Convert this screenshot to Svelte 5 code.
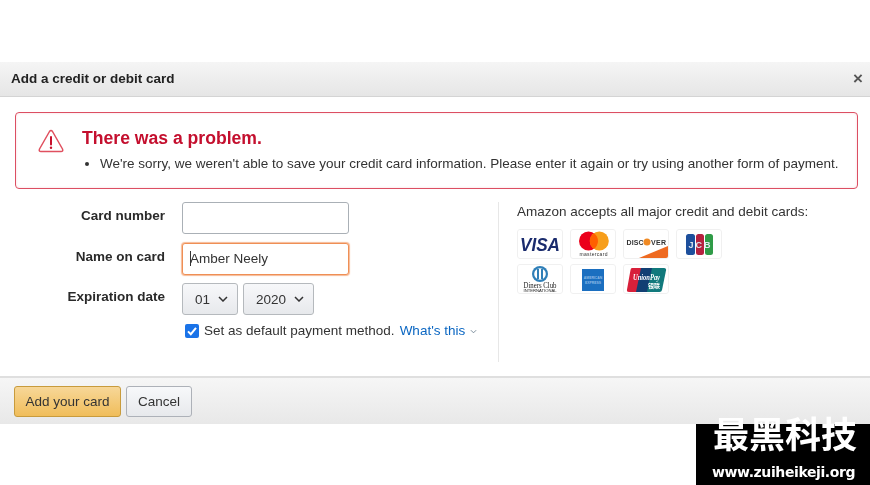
<script>
  let name = 'Amber Neely'
  let isDefault = true
</script>

<div class="page">
  <section class="dialog">
    <header class="head">
      <h1>Add a credit or debit card</h1>
      <span class="close">×</span>
    </header>

    <div class="body">
      <div class="alert">
        <svg class="warn" viewBox="0 0 26 24" width="26" height="24">
          <path d="M11.500 2.500 Q13 0.500 14.500 2.500 L24.500 20 Q25.500 22.500 23 22.500 H3 Q0.500 22.500 1.500 20 Z" fill="none" stroke="#e0505f" stroke-width="1.500" stroke-linejoin="round" />
          <path d="M13 8 V15.500" stroke="#c7102c" stroke-width="2" stroke-linecap="round" />
          <circle cx="13" cy="18.800" r="1.200" fill="#c7102c" />
        </svg>
        <div class="alert-text">
          <h2>There was a problem.</h2>
          <ul>
            <li>We're sorry, we weren't able to save your credit card information. Please enter it again or try using another form of payment.</li>
          </ul>
        </div>
      </div>

      <div class="columns">
        <form class="form">
          <label class="lbl" for="num">Card number</label>
          <input id="num" class="field" type="text" />

          <label class="lbl" for="nm">Name on card</label>
          <div class="field focus" id="nm"><i class="caret"></i>{name}</div>

          <span class="lbl">Expiration date</span>
          <div class="selects">
            <div class="sel month">01<svg viewBox="0 0 10 6" width="10" height="6"><path d="M1 1 L5 5 L9 1" fill="none" stroke="#333" stroke-width="1.500" /></svg></div>
            <div class="sel year">2020<svg viewBox="0 0 10 6" width="10" height="6"><path d="M1 1 L5 5 L9 1" fill="none" stroke="#333" stroke-width="1.500" /></svg></div>
          </div>

          <div class="default">
            <span class="check" class:on={isDefault}>
              <svg viewBox="0 0 14 14" width="14" height="14"><path d="M3 7.400 L5.800 10.200 L11 3.800" fill="none" stroke="#fff" stroke-width="2" /></svg>
            </span>
            <span class="set">Set as default payment method.</span>
            <a href="#top">What's this <svg viewBox="0 0 8 5" width="7" height="5"><path d="M1 1 L4 4 L7 1" fill="none" stroke="#6b7f8f" stroke-width="1" /></svg></a>
          </div>
        </form>

        <aside class="cards">
          <p>Amazon accepts all major credit and debit cards:</p>
          <div class="logos">
            <div class="logo">
              <svg viewBox="0 0 46 30" width="46" height="30">
                <text x="3" y="21.500" textLength="40" lengthAdjust="spacingAndGlyphs" class="visa">VISA</text>
              </svg>
            </div>
            <div class="logo">
              <svg viewBox="0 0 46 30" width="46" height="30">
                <circle cx="18.500" cy="12" r="9.500" fill="#eb001b" />
                <circle cx="29.300" cy="12" r="9.500" fill="#f79e1b" />
                <path d="M23.900 4.200 A9.500 9.500 0 0 1 23.900 19.800 A9.500 9.500 0 0 1 23.900 4.200 Z" fill="#ff5f00" />
                <text x="23.500" y="27" text-anchor="middle" textLength="28" class="mc">mastercard</text>
              </svg>
            </div>
            <div class="logo">
              <svg viewBox="0 0 46 30" width="46" height="30">
                <path d="M16 29 L45 17 V29 Z" fill="#ee6a21" />
                <text x="3.500" y="16" textLength="17" class="disc">DISC</text>
                <circle cx="24" cy="13" r="3.500" fill="#f08a24" />
                <text x="28" y="16" textLength="15" class="disc">VER</text>
              </svg>
            </div>
            <div class="logo">
              <svg viewBox="0 0 46 30" width="46" height="30">
                <rect x="10" y="5" width="9" height="21" rx="2.500" fill="#1d4f9c" />
                <rect x="20" y="5" width="8" height="21" rx="2.500" fill="#b5213f" />
                <rect x="29" y="5" width="8" height="21" rx="2.500" fill="#2f9b47" />
                <text x="23.500" y="18.500" text-anchor="middle" textLength="22" class="jcb">JCB</text>
              </svg>
            </div>
            <div class="logo">
              <svg viewBox="0 0 46 30" width="46" height="30">
                <circle cx="23" cy="10" r="8" fill="#2f7fb8" />
                <circle cx="23" cy="10" r="5.800" fill="#fff" />
                <rect x="20" y="5" width="2" height="10" fill="#2f7fb8" />
                <rect x="24" y="5" width="2" height="10" fill="#2f7fb8" />
                <text x="23" y="24" text-anchor="middle" textLength="33" lengthAdjust="spacingAndGlyphs" class="diners">Diners Club</text>
                <text x="23" y="28" text-anchor="middle" textLength="33" lengthAdjust="spacingAndGlyphs" class="intl">INTERNATIONAL</text>
              </svg>
            </div>
            <div class="logo">
              <svg viewBox="0 0 46 30" width="46" height="30">
                <rect x="12" y="5" width="22" height="22" fill="#1b6fc0" />
                <text x="23" y="14.500" text-anchor="middle" class="amex">AMERICAN</text>
                <text x="23" y="20" text-anchor="middle" class="amex">EXPRESS</text>
              </svg>
            </div>
            <div class="logo">
              <svg viewBox="0 0 46 30" width="46" height="30">
                <path d="M9 4 H20 L15 28 H6 Q3.500 28 4 25.500 L7.500 6 Q7.800 4 9 4 Z" fill="#d8203a" />
                <path d="M18 4 H31 L26 28 H13 Z" fill="#123f73" />
                <path d="M29 4 H41 Q43.500 4 43 6.500 L39 26 Q38.500 28 36.500 28 H24 Z" fill="#11797c" />
                <text x="23.500" y="16" text-anchor="middle" textLength="27" lengthAdjust="spacingAndGlyphs" class="union">UnionPay</text>
                <text x="31" y="24" text-anchor="middle" class="union-cn">银联</text>
              </svg>
            </div>
          </div>
        </aside>
      </div>
    </div>

    <footer class="foot">
      <button class="primary" type="button">Add your card</button>
      <button class="secondary" type="button">Cancel</button>
    </footer>
  </section>

  <div class="mark">
    <strong>最黑科技</strong>
    <span>www.zuiheikeji.org</span>
  </div>
</div>

<style>
  :global(body) {
    margin: 0;
    background: #fff;
  }

  .page {
    position: relative;
    width: 870px;
    height: 485px;
    padding-top: 62px;
    box-sizing: border-box;
    overflow: hidden;
    font-family: "Liberation Sans", Arial, sans-serif;
    font-size: 13.500px;
    color: #333;
  }

  .dialog {
    filter: blur(0.35px);
  }

  .head {
    height: 35px;
    box-sizing: border-box;
    display: flex;
    align-items: center;
    justify-content: space-between;
    padding: 0 7px 1px 11px;
    background: linear-gradient(#f5f5f5, #e6e6e6);
    border-bottom: 1px solid #d4d4d4;
  }

  h1 {
    margin: 0;
    font-size: 13.500px;
    line-height: 19px;
    font-weight: 700;
    color: #222;
  }

  .close {
    font-size: 17px;
    line-height: 17px;
    font-weight: 700;
    color: #555;
  }

  .body {
    height: 279px;
    box-sizing: border-box;
    padding: 15px 12px 0 15px;
  }

  .alert {
    height: 77px;
    box-sizing: border-box;
    display: flex;
    padding: 15px 0 0 22px;
    border: 1px solid #dc4f62;
    border-radius: 4px;
    box-shadow: inset 0 0 2px 1px #fdeef0;
  }

  .warn {
    margin-top: 1px;
    flex: none;
  }

  .alert-text {
    margin-left: 18px;
  }

  h2 {
    margin: 0;
    font-size: 17.600px;
    line-height: 21px;
    font-weight: 700;
    color: #c40f2e;
  }

  ul {
    margin: 7px 0 0;
    padding: 0 0 0 18px;
  }

  li {
    line-height: 16px;
    white-space: nowrap;
  }

  .columns {
    display: flex;
    margin-top: 13px;
  }

  .form {
    width: 484px;
    height: 160px;
    box-sizing: border-box;
    border-right: 1px solid #e7e7e7;
    display: grid;
    grid-template-columns: 150px 1fr;
    grid-template-rows: 32px 32px 32px auto;
    column-gap: 17px;
    row-gap: 8.500px;
    align-content: start;
  }

  .lbl {
    text-align: right;
    font-weight: 700;
    line-height: 28px;
    color: #2a2a2a;
  }

  .field {
    width: 167px;
    height: 32px;
    box-sizing: border-box;
    border: 1px solid #aab0b6;
    border-radius: 3px;
    background: #fff;
    padding: 0 7px;
    margin: 0;
    outline: none;
    font: inherit;
  }

  .focus {
    display: flex;
    align-items: center;
    border: 1px solid #ef8f55;
    box-shadow: 0 0 1px 1px rgba(240, 140, 80, 0.6);
    color: #333;
  }

  .caret {
    width: 1px;
    height: 15px;
    background: #333;
    margin-right: -1px;
  }

  .selects {
    display: flex;
    gap: 5px;
  }

  .sel {
    height: 32px;
    box-sizing: border-box;
    display: flex;
    align-items: center;
    justify-content: space-between;
    padding: 0 9px 0 12px;
    border: 1px solid #b5b9bd;
    border-radius: 3px;
    background: linear-gradient(#f7f8fa, #e7e9ec);
  }

  .month {
    width: 56px;
  }

  .year {
    width: 71px;
  }

  .default {
    grid-column: 2;
    display: flex;
    align-items: center;
    height: 16px;
    margin-top: -1px;
    padding-left: 3px;
    white-space: nowrap;
  }

  .check {
    width: 14px;
    height: 14px;
    border-radius: 2px;
    background: #1a73e8;
    margin-right: 5px;
    flex: none;
    display: flex;
  }

  .set {
    margin-right: 5px;
  }

  a {
    color: #0a66c2;
    text-decoration: none;
  }

  a svg {
    vertical-align: 1px;
    margin-left: 1px;
  }

  .cards {
    padding: 1px 0 0 18px;
  }

  .cards p {
    margin: 0;
    line-height: 17px;
  }

  .logos {
    display: grid;
    grid-template-columns: repeat(4, 46px);
    grid-auto-rows: 30px;
    gap: 5px 7px;
    margin-top: 9px;
  }

  .logo {
    box-sizing: border-box;
    border: 1px solid #f0f0f0;
    border-radius: 3px;
    overflow: hidden;
  }

  .logo svg {
    display: block;
    margin: -1px;
  }

  .visa {
    font: italic 700 18px "Liberation Sans", sans-serif;
    fill: #1a2b6d;
  }

  .mc {
    font: 400 5px "Liberation Sans", sans-serif;
    fill: #333;
  }

  .disc {
    font: 700 7px "Liberation Sans", sans-serif;
    fill: #333;
  }

  .jcb {
    font: 700 9px "Liberation Sans", sans-serif;
    fill: #dfe6ee;
  }

  .diners {
    font: 8px "Liberation Serif", serif;
    fill: #222;
  }

  .intl {
    font: 2.600px "Liberation Sans", sans-serif;
    fill: #222;
  }

  .amex {
    font: 700 3.400px "Liberation Sans", sans-serif;
    fill: #8fbbe6;
  }

  .union {
    font: italic 700 8px "Liberation Serif", serif;
    fill: #fff;
  }

  .union-cn {
    font: 700 6px "Noto Sans CJK SC", sans-serif;
    fill: #fff;
  }

  .foot {
    height: 48px;
    box-sizing: border-box;
    display: flex;
    align-items: flex-start;
    gap: 5px;
    padding: 8px 0 0 14px;
    background: linear-gradient(#f6f6f6, #e8e8e8);
    border-top: 2px solid #dfdfdf;
  }

  button {
    height: 31px;
    box-sizing: border-box;
    padding: 0;
    border-radius: 3px;
    font: 13.500px "Liberation Sans", Arial, sans-serif;
    color: #333;
  }

  .primary {
    width: 107px;
    border: 1px solid #c89b3c;
    background: linear-gradient(#f7d798, #f0bd5a);
  }

  .secondary {
    width: 66px;
    border: 1px solid #adb1b8;
    background: linear-gradient(#f7f8fa, #e7e9ec);
  }

  .mark {
    position: absolute;
    right: 0;
    bottom: 0;
    width: 174px;
    height: 61px;
    background: #000;
    color: #fff;
    text-align: center;
  }

  .mark strong {
    position: absolute;
    left: 17px;
    top: -14px;
    font: 700 36px/44px "Noto Sans CJK SC", sans-serif;
    white-space: nowrap;
  }

  .mark span {
    position: absolute;
    left: 16px;
    top: 40px;
    font: 700 14px/17px "DejaVu Sans", sans-serif;
    letter-spacing: -0.4px;
    white-space: nowrap;
  }
</style>
